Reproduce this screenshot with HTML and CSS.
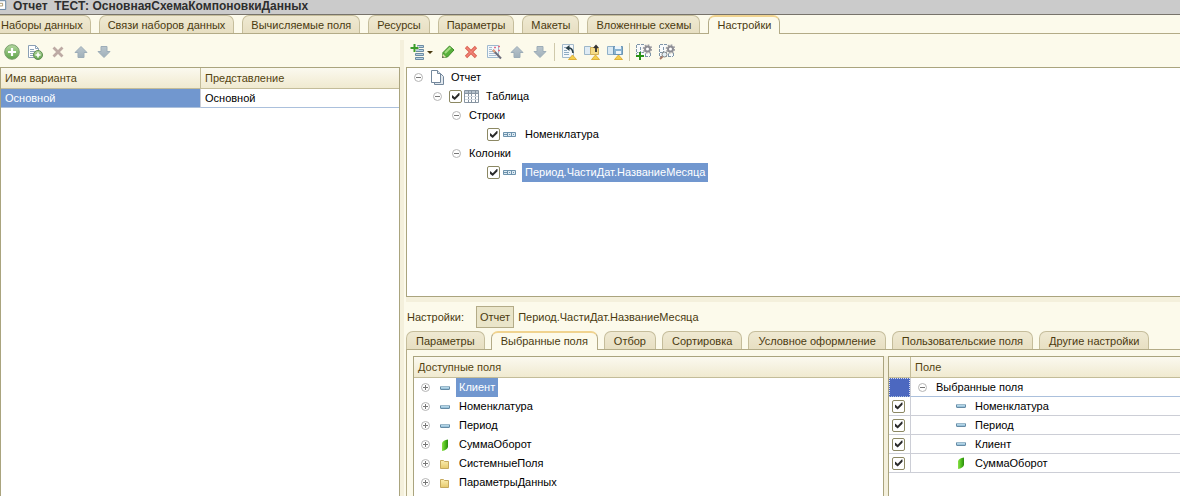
FILE: index.html
```html
<!DOCTYPE html>
<html lang="ru">
<head>
<meta charset="utf-8">
<title>Отчет ТЕСТ: ОсновнаяСхемаКомпоновкиДанных</title>
<link rel="stylesheet" href="styles.css">
</head>
<body>
<svg class="defs" aria-hidden="true">
  <defs>
    <linearGradient id="g-green" x1="0" y1="0" x2="0" y2="1"><stop offset="0" stop-color="#b4d8a0"/><stop offset="1" stop-color="#5fa34a"/></linearGradient>
    <linearGradient id="g-arrow" x1="0" y1="0" x2="0" y2="1"><stop offset="0" stop-color="#b9c5cc"/><stop offset="1" stop-color="#a0b0ba"/></linearGradient>
    <linearGradient id="g-leaf" x1="0" y1="0" x2="1" y2="0"><stop offset="0" stop-color="#8be04a"/><stop offset=".5" stop-color="#4fbf1c"/><stop offset="1" stop-color="#2c8a10"/></linearGradient>
    <linearGradient id="g-folder" x1="0" y1="0" x2="0" y2="1"><stop offset="0" stop-color="#fbeeb0"/><stop offset="1" stop-color="#e6c96c"/></linearGradient>
    <symbol id="i-add" viewBox="0 0 16 16"><circle cx="8" cy="8" r="7.3" fill="url(#g-green)" stroke="#7a9f6d"/><path d="M8 4v8M4 8h8" stroke="#fff" stroke-width="2.2"/></symbol>
    <symbol id="i-copy" viewBox="0 0 16 16"><path d="M1.500 1.500h7l3 3v9h-10z" fill="#fff" stroke="#8ba0b5"/><path d="M8.500 1.500v3h3M3 5.500h4M3 7.500h6M3 9.500h5M3 11.500h4" fill="none" stroke="#8ea5ba"/><circle cx="11" cy="11" r="4.500" fill="url(#g-green)" stroke="#5e8d50"/><path d="M11 8.500v5M8.500 11h5" stroke="#fff" stroke-width="1.600"/></symbol>
    <symbol id="i-x-off" viewBox="0 0 16 16"><path d="M3.500 3.500l9 9M12.500 3.500l-9 9" stroke="#bdaaa4" stroke-width="2.800"/></symbol>
    <symbol id="i-x" viewBox="0 0 16 16"><path d="M3 3l10 10M13 3l-10 10" stroke="#d9604f" stroke-width="3.200"/><path d="M3.500 3.500l9 9M12.500 3.500l-9 9" stroke="#f1857a" stroke-width="1.500"/></symbol>
    <symbol id="i-up" viewBox="0 0 16 16"><path d="M8 2.500l6 6h-3v5h-6v-5h-3z" fill="url(#g-arrow)" stroke="#9dadb8" stroke-linejoin="round"/></symbol>
    <symbol id="i-down" viewBox="0 0 16 16"><path d="M8 13.500l6-6h-3v-5h-6v5h-3z" fill="url(#g-arrow)" stroke="#9dadb8" stroke-linejoin="round"/></symbol>
    <symbol id="i-add-list" viewBox="0 0 16 16"><path d="M7.500 1.500h6v2h-6zM5.500 5.500h8v2h-8zM5.500 9.500h8v2h-8zM5.500 13.500h8v2h-8z" fill="#b9d3e3" stroke="#6c8ba2"/><path d="M4.500 0v8M0 4h9" stroke="#fcfaeb" stroke-width="3"/><path d="M4.500 0v8M0.500 4h8" stroke="#3b9d2a" stroke-width="2"/></symbol>
    <symbol id="i-pencil" viewBox="0 0 16 16"><path d="M2.500 13.500l.5-5 6.500-6.500 4.500 4-6.500 7z" fill="#58b03c" stroke="#3d8a28"/><path d="M5 9l5.500-5.500" stroke="#a4dc82" stroke-width="2"/><path d="M2 14l1-4 3 3z" fill="#e9dfb5"/><path d="M2 14l.7-2 1.300 1.300z" fill="#333"/></symbol>
    <symbol id="i-wand" viewBox="0 0 16 16"><path d="M1.500 1.500h11v12h-11z" fill="#f4f8fb" stroke="#9eb9cf"/><path d="M3 3.500h3M3 5.500h3M3 7.500h4M3 9.500h6M3 11.500h7" stroke="#a9bfd1"/><path d="M7 6l8 8.500" stroke="#6d6d7c" stroke-width="2"/><path d="M7 6l2 2" stroke="#e7a37a" stroke-width="2"/><path d="M8 3.500h2M9 2.500v2M12 2.500h2M13 1.500v2M12 6.500h2M13 5.500v2" stroke="#e46c84"/></symbol>
    <symbol id="i-warn" viewBox="0 0 16 16"><path d="M11.500 11l4 4.500h-8z" fill="#f4cf4b" stroke="#e0b03a" stroke-linejoin="round"/></symbol>
    <symbol id="i-restore" viewBox="0 0 16 16"><path d="M1.500 .5h11v13h-11z" fill="#f4f8fb" stroke="#a4bacb"/><path d="M3 3.500h2M3 6.500h3M3 8.500h5M3 10.500h5" stroke="#8fabc2"/><path d="M7 4q4.500-.5 5 5" fill="none" stroke="#263d46" stroke-width="1.600"/><path d="M4.500 4l4-3v6z" fill="#263d46"/><use href="#i-warn"/></symbol>
    <symbol id="i-load" viewBox="0 0 16 16"><path d="M.5 2.500h6v8h-6z" fill="#dfebf4" stroke="#9db7c9"/><path d="M6.500 3.500h3l1 1h4v6h-8z" fill="#f6dc87" stroke="#d2b05a"/><path d="M12 8v-5" stroke="#333" stroke-width="1.800"/><path d="M9 4l3-3.500 3 3.500z" fill="#333"/><use href="#i-warn"/></symbol>
    <symbol id="i-save" viewBox="0 0 16 16"><path d="M.5 2.500h6v8h-6z" fill="#d9e9f3" stroke="#8fb0c8"/><path d="M6.500 2.500h9v8h-9z" fill="#8ab4d2" stroke="#6b95b4"/><path d="M8 2h6v3H8zM9 7h5v3H9z" fill="#edf5fa"/><use href="#i-warn"/></symbol>
    <symbol id="i-gear" viewBox="0 0 16 16"><circle cx="11.500" cy="5" r="5" fill="#fcfaeb"/><circle cx="11.500" cy="5" r="4" fill="none" stroke="#a2a2a8" stroke-width="1.600" stroke-dasharray="1.700 1.400"/><circle cx="11.500" cy="5" r="2.500" fill="#fff" stroke="#8d8d94" stroke-width="2"/></symbol>
    <symbol id="i-table" viewBox="0 0 16 16"><path d="M.5 .5h14v12h-14z" fill="#f8fafb"/><path d="M1 .5h7M1 8.500h13M1 12.500h13" fill="none" stroke="#7e95a8" stroke-dasharray="3 1"/><path d="M.5 1v12M4.500 3v10M9.500 9v4M14.500 9v4" stroke="#7e95a8" stroke-dasharray="3 1"/><use href="#i-gear"/></symbol>
    <symbol id="i-set-add" viewBox="0 0 16 16"><use href="#i-table"/><path d="M4 8v8M0 12h8" stroke="#fff" stroke-width="3"/><path d="M4 8v8M0 12h8" stroke="#299317" stroke-width="2"/></symbol>
    <symbol id="i-set-find" viewBox="0 0 16 16"><use href="#i-table"/><path d="M1 15l3-3" stroke="#a97865" stroke-width="2"/><circle cx="5.500" cy="10.500" r="2.500" fill="#e2eef5" stroke="#888"/></symbol>
    <symbol id="i-pages" viewBox="0 0 16 16"><path d="M4.500 3.500h6l3 3v8h-9z" fill="#e3e9ef" stroke="#74889c"/><path d="M1.500 .5h6l3 3v9h-9z" fill="#fff" stroke="#74889c"/><path d="M7.500 .5v3h3" fill="#dfe7ee" stroke="#74889c"/></symbol>
    <symbol id="i-grid" viewBox="0 0 16 16"><path d="M.5 1.500h14v12h-14z" fill="#fff" stroke="#8794a1"/><path d="M1 2h13v2H1z" fill="#b4c0cb"/><path d="M1 4.500h13M4.500 2v12M7.500 2v12M11.500 2v12" stroke="#8794a1"/><path d="M1 7.500h13M1 10.500h13" stroke="#d3dae1"/></symbol>
    <symbol id="i-group" viewBox="0 0 14 8"><path d="M.5 1.500h12v4H.5z" fill="#dceaf3" stroke="#6d92ac"/><path d="M4.500 1v5M8.500 1v5" stroke="#6d92ac"/><path d="M1 3h3v1H1zM6 3h1v1H6zM10 3h1v1h-1z" fill="#6d92ac"/></symbol>
    <symbol id="i-field" viewBox="0 0 14 14"><rect x="2.500" y="5.500" width="9" height="3" rx=".5" fill="#9bc4dc" stroke="#668ba5"/><path d="M3 6h8" stroke="#cde5f0"/></symbol>
    <symbol id="i-leaf" viewBox="0 0 14 14"><path d="M4 5q1-3 6-3.500v7.500q-1 3-6 4z" fill="url(#g-leaf)"/></symbol>
    <symbol id="i-folder" viewBox="0 0 14 14"><path d="M2.500 3.500h3l1 1h4v7h-8z" fill="url(#g-folder)" stroke="#c6a95d"/></symbol>
    <symbol id="i-minus" viewBox="0 0 9 9"><circle cx="4.500" cy="4.500" r="4" fill="#fff" stroke="#b4b4b4"/><path d="M2 4.500h5" stroke="#777"/></symbol>
    <symbol id="i-plus" viewBox="0 0 9 9"><circle cx="4.500" cy="4.500" r="4" fill="#fff" stroke="#b4b4b4"/><path d="M2 4.500h5M4.500 2v5" stroke="#777"/></symbol>
    <symbol id="i-doc" viewBox="0 0 8 12"><path d="M0 .5h6.500v10H0" fill="#fff" stroke="#56789a"/><path d="M0 3.500h3v3H0" fill="none" stroke="#a49163"/></symbol>
  </defs>
</svg>
<div class="window">
  <header class="title">
    <svg class="title-icon"><use href="#i-doc"/></svg>
    <h1 class="title-text">Отчет&nbsp; ТЕСТ: ОсновнаяСхемаКомпоновкиДанных</h1>
  </header>
  <nav class="tabs tabs-main">
    <button class="tab tab-edge">Наборы данных</button>
    <button class="tab">Связи наборов данных</button>
    <button class="tab">Вычисляемые поля</button>
    <button class="tab">Ресурсы</button>
    <button class="tab">Параметры</button>
    <button class="tab">Макеты</button>
    <button class="tab">Вложенные схемы</button>
    <button class="tab tab-active">Настройки</button>
  </nav>
  <main class="work">
    <section class="variants">
      <div class="toolbar">
        <button class="tool" aria-label="Добавить"><svg class="icon"><use href="#i-add"/></svg></button>
        <button class="tool" aria-label="Скопировать"><svg class="icon"><use href="#i-copy"/></svg></button>
        <button class="tool" aria-label="Удалить"><svg class="icon"><use href="#i-x-off"/></svg></button>
        <button class="tool" aria-label="Вверх"><svg class="icon"><use href="#i-up"/></svg></button>
        <button class="tool" aria-label="Вниз"><svg class="icon"><use href="#i-down"/></svg></button>
      </div>
      <div class="box variants-box">
        <table class="grid">
          <thead><tr><th>Имя варианта</th><th>Представление</th></tr></thead>
          <tbody><tr class="current"><td class="selected">Основной</td><td>Основной</td></tr></tbody>
        </table>
      </div>
    </section>
    <div class="splitter-v"></div>
    <section class="settings">
      <div class="toolbar">
        <button class="tool tool-menu" aria-label="Добавить элемент"><svg class="icon"><use href="#i-add-list"/></svg><span class="caret"></span></button>
        <button class="tool" aria-label="Изменить"><svg class="icon"><use href="#i-pencil"/></svg></button>
        <button class="tool" aria-label="Удалить"><svg class="icon"><use href="#i-x"/></svg></button>
        <button class="tool" aria-label="Конструктор"><svg class="icon"><use href="#i-wand"/></svg></button>
        <button class="tool" aria-label="Вверх"><svg class="icon"><use href="#i-up"/></svg></button>
        <button class="tool" aria-label="Вниз"><svg class="icon"><use href="#i-down"/></svg></button>
        <span class="separator"></span>
        <button class="tool" aria-label="Стандартные настройки"><svg class="icon"><use href="#i-restore"/></svg></button>
        <button class="tool" aria-label="Загрузить настройки"><svg class="icon"><use href="#i-load"/></svg></button>
        <button class="tool" aria-label="Сохранить настройки"><svg class="icon"><use href="#i-save"/></svg></button>
        <span class="separator"></span>
        <button class="tool" aria-label="Добавить пользовательские настройки"><svg class="icon"><use href="#i-set-add"/></svg></button>
        <button class="tool" aria-label="Свойства пользовательских настроек"><svg class="icon"><use href="#i-set-find"/></svg></button>
      </div>
      <div class="box structure">
        <div class="node"><svg class="toggle"><use href="#i-minus"/></svg><svg class="icon node-icon"><use href="#i-pages"/></svg><span class="label">Отчет</span></div>
        <div class="node level-1"><svg class="toggle"><use href="#i-minus"/></svg><input class="check" type="checkbox" id="n-table" checked><svg class="icon"><use href="#i-grid"/></svg><label class="label" for="n-table">Таблица</label></div>
        <div class="node level-2"><svg class="toggle"><use href="#i-minus"/></svg><span class="label">Строки</span></div>
        <div class="node level-3"><input class="check" type="checkbox" id="n-row" checked><svg class="group-icon"><use href="#i-group"/></svg><label class="label" for="n-row">Номенклатура</label></div>
        <div class="node level-2"><svg class="toggle"><use href="#i-minus"/></svg><span class="label">Колонки</span></div>
        <div class="node level-3"><input class="check" type="checkbox" id="n-col" checked><svg class="group-icon"><use href="#i-group"/></svg><label class="label selected" for="n-col">Период.ЧастиДат.НазваниеМесяца</label></div>
      </div>
      <div class="splitter-h"></div>
      <div class="scope">
        <span class="scope-title">Настройки:</span>
        <button class="scope-item scope-pressed">Отчет</button>
        <button class="scope-item">Период.ЧастиДат.НазваниеМесяца</button>
      </div>
      <nav class="tabs tabs-settings">
        <button class="tab">Параметры</button>
        <button class="tab tab-active">Выбранные поля</button>
        <button class="tab">Отбор</button>
        <button class="tab">Сортировка</button>
        <button class="tab">Условное оформление</button>
        <button class="tab">Пользовательские поля</button>
        <button class="tab">Другие настройки</button>
      </nav>
      <div class="page">
        <div class="box available">
          <div class="heading">Доступные поля</div>
          <div class="node"><svg class="toggle"><use href="#i-plus"/></svg><svg class="field-icon"><use href="#i-field"/></svg><span class="label selected">Клиент</span></div>
          <div class="node"><svg class="toggle"><use href="#i-plus"/></svg><svg class="field-icon"><use href="#i-field"/></svg><span class="label">Номенклатура</span></div>
          <div class="node"><svg class="toggle"><use href="#i-plus"/></svg><svg class="field-icon"><use href="#i-field"/></svg><span class="label">Период</span></div>
          <div class="node"><svg class="toggle"><use href="#i-plus"/></svg><svg class="field-icon"><use href="#i-leaf"/></svg><span class="label">СуммаОборот</span></div>
          <div class="node"><svg class="toggle"><use href="#i-plus"/></svg><svg class="field-icon"><use href="#i-folder"/></svg><span class="label">СистемныеПоля</span></div>
          <div class="node"><svg class="toggle"><use href="#i-plus"/></svg><svg class="field-icon"><use href="#i-folder"/></svg><span class="label">ПараметрыДанных</span></div>
        </div>
        <div class="splitter-inner"></div>
        <div class="box chosen">
          <table class="grid">
            <colgroup><col class="col-check"><col></colgroup>
            <thead><tr><th></th><th>Поле</th></tr></thead>
            <tbody>
              <tr class="current"><td class="cursor"></td><td><div class="cell"><svg class="toggle"><use href="#i-minus"/></svg><span class="label">Выбранные поля</span></div></td></tr>
              <tr><td class="check-cell"><input class="check" type="checkbox" id="f1" checked></td><td><div class="cell cell-child"><svg class="field-icon"><use href="#i-field"/></svg><label class="label" for="f1">Номенклатура</label></div></td></tr>
              <tr><td class="check-cell"><input class="check" type="checkbox" id="f2" checked></td><td><div class="cell cell-child"><svg class="field-icon"><use href="#i-field"/></svg><label class="label" for="f2">Период</label></div></td></tr>
              <tr><td class="check-cell"><input class="check" type="checkbox" id="f3" checked></td><td><div class="cell cell-child"><svg class="field-icon"><use href="#i-field"/></svg><label class="label" for="f3">Клиент</label></div></td></tr>
              <tr><td class="check-cell"><input class="check" type="checkbox" id="f4" checked></td><td><div class="cell cell-child"><svg class="field-icon"><use href="#i-leaf"/></svg><label class="label" for="f4">СуммаОборот</label></div></td></tr>
            </tbody>
          </table>
        </div>
      </div>
    </section>
  </main>
</div>
</body>
</html>
```
FILE: styles.css
```css
* { box-sizing: border-box; }
body { margin: 0; font: 11px/18px "Liberation Sans", Arial, sans-serif; color: #000; background: #fcfaeb; }
button { font: inherit; color: inherit; border: 0; padding: 0; background: none; white-space: nowrap; }
svg { display: block; flex: none; }
.defs { position: absolute; width: 0; height: 0; }
.window { display: flex; flex-direction: column; height: 100vh; overflow: hidden; }

.title { flex: none; display: flex; align-items: flex-start; gap: 6px; height: 15px; background: #cbcbcb; border-bottom: 1px solid #77736b; }
.title-icon { width: 7px; height: 11px; }
.title-text { margin: 0; font-size: 12px; line-height: 13px; color: #2e2e2e; white-space: nowrap; }

.tabs { flex: none; display: flex; gap: 7px; height: 19px; border-bottom: 1px solid #b3ab87; color: #4a3a10; }
.tabs-main { gap: 8px; }
.tabs-settings { gap: 6px; }
.tab { height: 18px; padding: 0 9px; line-height: 18px; background: linear-gradient(#efe9d2, #e7dfc2); border: 1px solid #c5bd9b; border-bottom: 0; border-radius: 7px 7px 0 0; }
.tabs-main .tab { padding: 0 8px; }
.tabs-main .tab-edge { padding: 0 7px 0 1px; border-left: 0; border-top-left-radius: 0; }
.tabs .tab-active { height: 19px; padding-bottom: 2px; line-height: 14px; background: #fcfaeb; border-color: #b3ab87; border-top: 2px solid #f0d38f; }

.work { flex: 1; display: flex; min-height: 0; }
.variants { flex: 0 0 400px; display: flex; flex-direction: column; }
.settings { flex: 1; display: flex; flex-direction: column; min-width: 0; }
.splitter-v { flex: none; width: 4px; margin: 6px 2px 0 0; background: #f4f0dc; }
.splitter-h { flex: none; height: 5px; background: #f4f0dc; }
.splitter-inner { flex: none; width: 4px; background: #f4f0dc; }

.toolbar { flex: none; display: flex; align-items: center; gap: 7px; height: 33px; padding: 3px 4px 0; }
.icon { width: 16px; height: 16px; }
.tool-menu { display: flex; align-items: center; gap: 1px; }
.caret { border: 3px solid transparent; border-top-color: #4a3a10; border-bottom: 0; }
.separator { width: 1px; height: 18px; margin: 0 -1px; background: #cfc9ab; }

.box { background: #fff; border: 1px solid #aaa47e; }
.variants-box { flex: 1; border-bottom: 0; }
.structure { flex: 0 0 230px; border-right: 0; }

.grid { width: 100%; border-collapse: separate; border-spacing: 0; table-layout: fixed; }
.grid th { height: 21px; padding: 0 4px; text-align: left; font-weight: normal; line-height: 20px; color: #54440f; background: linear-gradient(#fbf9ef, #f0ead0); border-bottom: 1px solid #c3bc99; }
.grid th + th { border-left: 1px solid #c3bc99; }
.grid td { height: 19px; padding: 0 4px; border-bottom: 1px solid #ccced6; }
.grid td + td { border-left: 1px solid #ccced6; }
.grid .current td { border-bottom-color: #abc0dc; }
.grid .selected, .label.selected { color: #fff; background: #7197cf; }
.col-check { width: 21px; }
.grid .cursor { background: #4c68c0; border: 1px dotted #d9def2; }
.grid .check-cell { padding: 0 3px; }

.node, .cell { display: flex; align-items: center; height: 19px; padding-left: 7px; }
.toggle { width: 9px; height: 9px; }
.label { padding: 0 3px; line-height: 19px; white-space: nowrap; }
.node-icon { margin: 0 2px 0 7px; }
.level-1 { padding-left: 26px; }
.level-2 { padding-left: 45px; }
.level-2 .label { margin-left: 5px; }
.level-3 { padding-left: 80px; }
.level-1 .check { margin-left: 7px; margin-right: 2px; }
.level-1 .label { margin-left: 3px; }
.level-3 .label { margin-left: 5px; }
.group-icon { width: 14px; height: 8px; margin-left: 3px; }
.check { appearance: none; flex: none; display: grid; place-items: center; width: 13px; height: 13px; margin: 0; background: #fff; border: 1px solid #8c8863; border-radius: 2px; }
.check:checked::before { content: ""; width: 8px; height: 8px; background: #2c2c2c; clip-path: polygon(0 35%, 12% 35%, 40% 60%, 90% 5%, 100% 5%, 100% 35%, 40% 95%, 0 62%); }

.scope { flex: none; display: flex; align-items: center; height: 29px; color: #4a3a10; }
.scope-title { margin: 0 12px 0 1px; }
.scope-item { height: 22px; padding: 0 3px; border: 1px solid transparent; }
.scope-pressed { background: #eae5c9; border-color: #b3ab87; }

.page { flex: 1; display: flex; min-height: 0; padding: 6px 0 0 6px; border-left: 1px solid #b3ab87; overflow: hidden; }
.available { flex: 0 0 471px; border-bottom: 0; }
.heading { height: 21px; padding: 0 4px; line-height: 20px; color: #54440f; background: linear-gradient(#fbf9ef, #f0ead0); border-bottom: 1px solid #c3bc99; }
.field-icon { width: 14px; height: 14px; }
.available .field-icon { margin: 0 4px 0 8px; }
.chosen { flex: 1; border-right: 0; border-bottom: 0; }
.chosen td { padding: 0; }
.cell { height: 18px; }
.cell .label { margin-left: 6px; }
.cell-child { padding-left: 43px; }
.cell-child .label { margin-left: 4px; }
```
